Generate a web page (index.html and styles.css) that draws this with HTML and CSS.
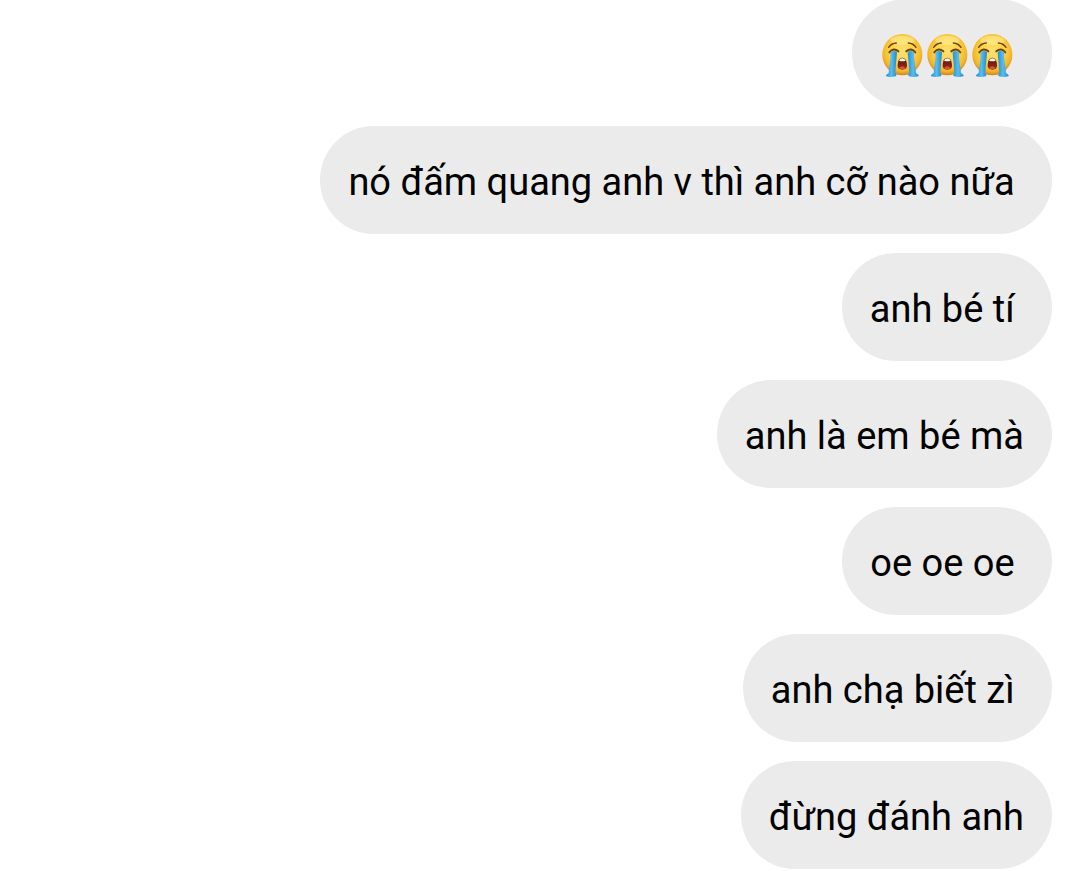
FILE: index.html
```html
<!DOCTYPE html>
<html lang="vi">
<head>
  <meta charset="UTF-8" />
  <meta name="viewport" content="width=device-width, initial-scale=1.0" />
  <title>Chat</title>
  <link rel="stylesheet" href="styles.css">
</head>
<body>
  <!-- SHARED EMOJI -->
  <svg class="defs" aria-hidden="true">
    <defs>
      <radialGradient id="face" cx="50%" cy="42%" r="60%">
        <stop offset="0" stop-color="#fee070"/>
        <stop offset=".5" stop-color="#fcd548"/>
        <stop offset=".8" stop-color="#f4b62a"/>
        <stop offset="1" stop-color="#c87a1c"/>
      </radialGradient>
      <linearGradient id="tear" x1="0" y1="0" x2="1" y2="0">
        <stop offset="0" stop-color="#2490d0"/>
        <stop offset=".5" stop-color="#55bdf0"/>
        <stop offset="1" stop-color="#2088c8"/>
      </linearGradient>
      <linearGradient id="mouth" x1="0" y1="0" x2="0" y2="1">
        <stop offset="0" stop-color="#5a1708"/>
        <stop offset="1" stop-color="#9a2c18"/>
      </linearGradient>
      <symbol id="sob" viewBox="0 0 135 132">
        <ellipse cx="67" cy="65" rx="60" ry="62" fill="url(#face)"/>
        <ellipse cx="67" cy="22" rx="36" ry="14" fill="#fff3b0" opacity=".45"/>
        <g fill="none" stroke="#70400f" stroke-linecap="round">
          <path d="M26 43Q34 31 49 30" stroke-width="4"/>
          <path d="M108 43Q100 31 85 30" stroke-width="4"/>
          <path d="M28 58Q40 43 55 55" stroke-width="6"/>
          <path d="M106 58Q94 43 79 55" stroke-width="6"/>
        </g>
        <g fill="url(#tear)">
          <path d="M31 58Q42 50 51 58C50 76 47 98 46 120Q52 126 47 130Q31 134 19 130Q15 126 26 120C28 96 34 79 31 58Z"/>
          <path d="M103 58Q92 50 83 58C84 76 87 98 88 120Q82 126 87 130Q103 134 115 130Q119 126 108 120C106 96 100 79 103 58Z"/>
        </g>
        <path d="M67 74C77 74 81 87 81 97C81 107 76 110 67 110S53 107 53 97C53 87 57 74 67 74Z" fill="url(#mouth)"/>
        <path d="M57 83Q60 76 67 76T77 83Q67 86 57 83Z" fill="#fff8ee"/>
        <path d="M57 105Q67 94 77 105Q74 109 67 109T57 105Z" fill="#dc5040"/>
      </symbol>
    </defs>
  </svg>

  <!-- some messages were sent with a trailing space, which stays visible -->
  <main class="chat">
    <div class="bubble"><svg class="emoji" role="img" aria-label="😭"><use href="#sob"/></svg><svg class="emoji" role="img" aria-label="😭"><use href="#sob"/></svg><svg class="emoji" role="img" aria-label="😭"><use href="#sob"/></svg> </div>
    <div class="bubble">nó đấm quang anh v thì anh cỡ nào nữa </div>
    <div class="bubble">anh bé tí </div>
    <div class="bubble">anh là em bé mà</div>
    <div class="bubble">oe oe oe </div>
    <div class="bubble">anh chạ biết zì </div>
    <div class="bubble">đừng đánh anh</div>
  </main>
</body>
</html>
```
FILE: styles.css
```css
*{margin:0;padding:0;box-sizing:border-box;}
body{
  font-family:Roboto,"Noto Sans",sans-serif;
  background:#fff;
  color:#000;
  overflow:hidden;
}
.defs{position:absolute;width:0;height:0;}

/* ---------- MESSAGE LIST, pinned to the newest one ---------- */
.chat{
  display:flex;
  flex-direction:column;
  align-items:flex-end;
  justify-content:flex-end;
  gap:19px;
  height:100vh;
  padding:0 28px 2px;
}

/* ---------- BUBBLES ---------- */
.bubble{
  flex-shrink:0;
  max-width:75%;
  padding:34px 28px 30px;
  border-radius:54px;
  background:#ebebeb;
  font-size:38px;
  line-height:44px;
  white-space:break-spaces;
}
.emoji{
  display:inline-block;
  width:45px;
  height:44px;
  vertical-align:top;
}
```
